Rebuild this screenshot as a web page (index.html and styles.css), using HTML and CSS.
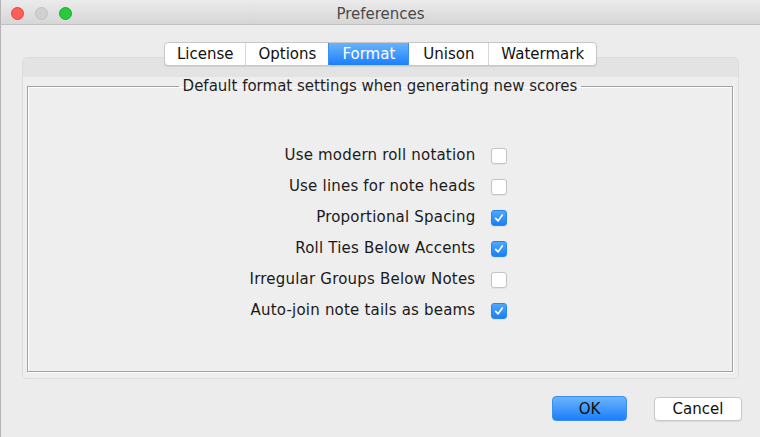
FILE: index.html
```html
<!DOCTYPE html>
<html>
<head>
<meta charset="utf-8">
<link rel="stylesheet" href="styles.css">
</head>
<body>
<div class="window">
  <div class="titlebar">
    <div class="lights">
      <span class="light red"></span>
      <span class="light gray"></span>
      <span class="light green"></span>
    </div>
    <div class="title">Preferences</div>
  </div>
  <div class="main">
    <div class="tabs">
      <div class="tab">License</div>
      <div class="tab">Options</div>
      <div class="tab active">Format</div>
      <div class="tab">Unison</div>
      <div class="tab">Watermark</div>
    </div>
    <div class="panel">
      <div class="panel-band"></div>
      <div class="panel-body">
        <fieldset class="group">
          <legend>Default format settings when generating new scores</legend>
          <div class="rows">
            <span class="label">Use modern roll notation</span><span class="cb"></span>
            <span class="label">Use lines for note heads</span><span class="cb"></span>
            <span class="label">Proportional Spacing</span><span class="cb on"><svg viewBox="0 0 16 16"><path d="M4.2 8.4 L7 11.3 L11.8 4.6" fill="none" stroke="#fff" stroke-width="1.9" stroke-linecap="round" stroke-linejoin="round"/></svg></span>
            <span class="label">Roll Ties Below Accents</span><span class="cb on"><svg viewBox="0 0 16 16"><path d="M4.2 8.4 L7 11.3 L11.8 4.6" fill="none" stroke="#fff" stroke-width="1.9" stroke-linecap="round" stroke-linejoin="round"/></svg></span>
            <span class="label">Irregular Groups Below Notes</span><span class="cb"></span>
            <span class="label">Auto-join note tails as beams</span><span class="cb on"><svg viewBox="0 0 16 16"><path d="M4.2 8.4 L7 11.3 L11.8 4.6" fill="none" stroke="#fff" stroke-width="1.9" stroke-linecap="round" stroke-linejoin="round"/></svg></span>
          </div>
        </fieldset>
      </div>
    </div>
    <div class="buttons">
      <button class="btn ok">OK</button>
      <button class="btn cancel">Cancel</button>
    </div>
  </div>
</div>
</body>
</html>
```
FILE: styles.css
```css
html, body {
  margin: 0;
  padding: 0;
  width: 760px;
  height: 437px;
  overflow: hidden;
  background: #ececec;
}
body {
  font-family: "DejaVu Sans", "Liberation Sans", sans-serif;
  font-size: 15px;
  color: #1a1a1a;
}
.window {
  width: 760px;
  height: 437px;
  display: flex;
  flex-direction: column;
  box-sizing: border-box;
  border-left: 1px solid #b4b4b4;
}
.titlebar {
  height: 25px;
  flex: none;
  box-sizing: border-box;
  background: linear-gradient(#ebebeb, #d6d6d6);
  border-bottom: 1px solid #c0c0c0;
  display: flex;
  align-items: center;
  position: relative;
}
.lights {
  display: flex;
  gap: 11px;
  padding-left: 10px;
  padding-top: 2px;
}
.light {
  width: 13px;
  height: 13px;
  border-radius: 50%;
  box-sizing: border-box;
}
.light.red { background: #fc5f57; border: 1px solid #e0443e; }
.light.gray { background: #d0d0d0; border: 1px solid #c2c2c2; }
.light.green { background: #28c840; border: 1px solid #1aab29; }
.title {
  position: absolute;
  left: 0;
  right: 0;
  top: 0;
  height: 24px;
  line-height: 28px;
  text-align: center;
  color: #4a4a4a;
  font-size: 15px;
  pointer-events: none;
}
.main {
  flex: 1;
  display: flex;
  flex-direction: column;
  padding: 17px 18px 0 21px;
}
.tabs {
  display: flex;
  justify-content: center;
  align-self: center;
  margin-right: 3px;
  position: relative;
  z-index: 1;
  margin-bottom: -9px;
  height: 24px;
  box-sizing: border-box;
  background: #fff;
  border: 1px solid #c6c6c6;
  border-radius: 4px;
  box-shadow: 0 1px 1px rgba(0,0,0,0.08);
  overflow: hidden;
}
.tab {
  display: flex;
  align-items: center;
  justify-content: center;
  height: 22px;
  min-width: 80px;
  box-sizing: border-box;
  padding: 0 12px;
  font-size: 15px;
  color: #111;
  border-left: 1px solid #d6d6d6;
}
.tab:first-child { border-left: none; }
.tab.active {
  background: linear-gradient(#6ab3fb, #1b80fa);
  color: #fff;
  border-left-color: #3b8ef5;
}
.tab.active + .tab { border-left-color: #3b8ef5; }
.panel {
  height: 322px;
  flex: none;
  box-sizing: border-box;
  margin-right: 3px;
  border: 1px solid #dcdcdc;
  border-radius: 5px;
  background: #ededed;
  display: flex;
  flex-direction: column;
  overflow: hidden;
}
.panel-band {
  height: 19px;
  background: #e3e3e3;
  flex: none;
}
.panel-body {
  flex: 1;
  display: flex;
  flex-direction: column;
  padding: 0 5px 6px 4px;
  background: #eeeeee;
}
.group {
  flex: 1;
  margin: 0;
  padding: 0;
  min-width: 0;
  border: 1px solid #a2a2a2;
  box-shadow: inset 1px 1px 0 #fff, 1px 1px 0 #fff;
  display: flex;
  flex-direction: column;
}
.group legend {
  margin: 0 auto;
  padding: 0 4px;
  font-size: 15px;
  color: #1f1f1f;
  line-height: 18px;
}
.rows {
  display: grid;
  grid-template-columns: auto 16px;
  column-gap: 16px;
  row-gap: 0;
  justify-content: center;
  align-items: center;
  padding-top: 45px;
  padding-right: 3px;
}
.label {
  text-align: right;
  font-size: 15px;
  letter-spacing: 0.2px;
  line-height: 31px;
  height: 31px;
  color: #1a1a1a;
}
.cb {
  width: 16px;
  height: 16px;
  box-sizing: border-box;
  border-radius: 3px;
  background: #fff;
  border: 1px solid #c4c4c4;
  box-shadow: 0 0.5px 1px rgba(0,0,0,0.05);
  display: flex;
}
.cb.on {
  background: linear-gradient(#4ea8fd, #1a7ff7);
  border: 1px solid #2a84ee;
}
.cb svg {
  width: 14px;
  height: 14px;
}
.buttons {
  display: flex;
  justify-content: flex-end;
  align-items: center;
  gap: 27px;
  padding-top: 17px;
}
.btn {
  font-family: "DejaVu Sans", "Liberation Sans", sans-serif;
  font-size: 15px;
  margin: 0;
  padding: 0;
  box-sizing: border-box;
  border-radius: 4px;
  color: #111;
}
.btn.ok {
  width: 75px;
  height: 25px;
  background: linear-gradient(#6cb4fb, #1a7ff9);
  border: 1px solid #3b8ef0;
}
.btn.cancel {
  width: 88px;
  height: 24px;
  background: #fff;
  border: 1px solid #c8c8c8;
  box-shadow: 0 1px 1px rgba(0,0,0,0.08);
}
```
